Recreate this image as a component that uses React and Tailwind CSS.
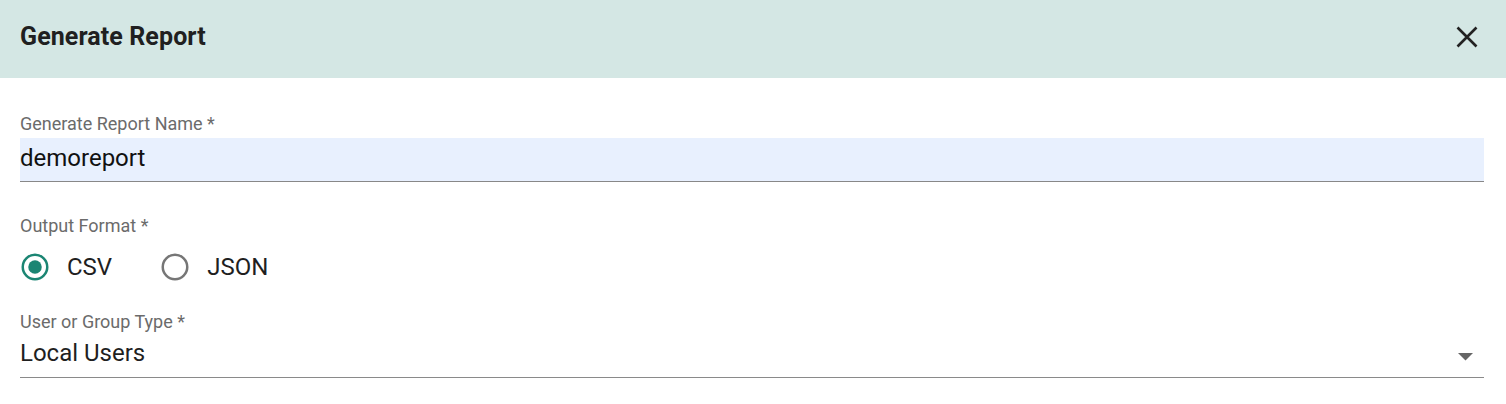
import React from "react";

function Radio({ checked }) {
  return (
    <svg width="30" height="30" viewBox="0 0 24 24" className="shrink-0">
      <circle cx="12" cy="12" r="9.8" fill="none" stroke={checked ? "#1b8573" : "#767676"} strokeWidth="2" />
      {checked && <circle cx="12" cy="12" r="5.4" fill="#1b8573" />}
    </svg>
  );
}

export default function App() {
  return (
    <div className="w-[1506px] h-[404px] bg-white font-['Roboto',sans-serif] text-[#1f1f1f]">
      <div className="h-[78px] bg-[#d4e7e4] flex items-center justify-between pl-5 pr-[28px] pb-[5px]">
        <h1 className="text-[25px] font-bold text-[#202020] leading-none tracking-[0.1px]">Generate Report</h1>
        <svg width="22" height="22" viewBox="0 0 22 22">
          <path d="M1.5 1.5 L20.5 20.5 M20.5 1.5 L1.5 20.5" stroke="#222" strokeWidth="2.6" />
        </svg>
      </div>
      <div className="px-5 pt-[35px]">
        <div className="text-[18px] leading-[22px] text-[#6b6b6b]">Generate Report Name *</div>
        <div className="h-[44px] bg-[#e8f0fe] border-b border-[#888] flex items-center mt-[3px] w-[1464px] pb-[4px]">
          <span className="text-[24px] leading-[28px] text-[#111]">demoreport</span>
        </div>
        <div className="mt-[33px] text-[18px] leading-[22px] text-[#6b6b6b]">Output Format *</div>
        <div className="flex items-center mt-[15px] h-[30px]">
          <Radio checked />
          <span className="ml-[17px] text-[24px] leading-[28px] text-[#1f1f1f]">CSV</span>
          <span className="ml-[48px] flex"><Radio /></span>
          <span className="ml-[17px] text-[24px] leading-[28px] text-[#1f1f1f]">JSON</span>
        </div>
        <div className="mt-[29px] text-[18px] leading-[22px] text-[#6b6b6b]">User or Group Type *</div>
        <div className="h-[45px] border-b border-[#8a8a8a] flex items-start justify-between w-[1464px] pt-[6px]">
          <span className="text-[24px] leading-[28px] text-[#1f1f1f]">Local Users</span>
          <svg width="15" height="8" viewBox="0 0 15 8" className="mr-[11px] mt-[14px]">
            <path d="M0 0 L15 0 L7.5 7.5 Z" fill="#666" />
          </svg>
        </div>
      </div>
    </div>
  );
}
